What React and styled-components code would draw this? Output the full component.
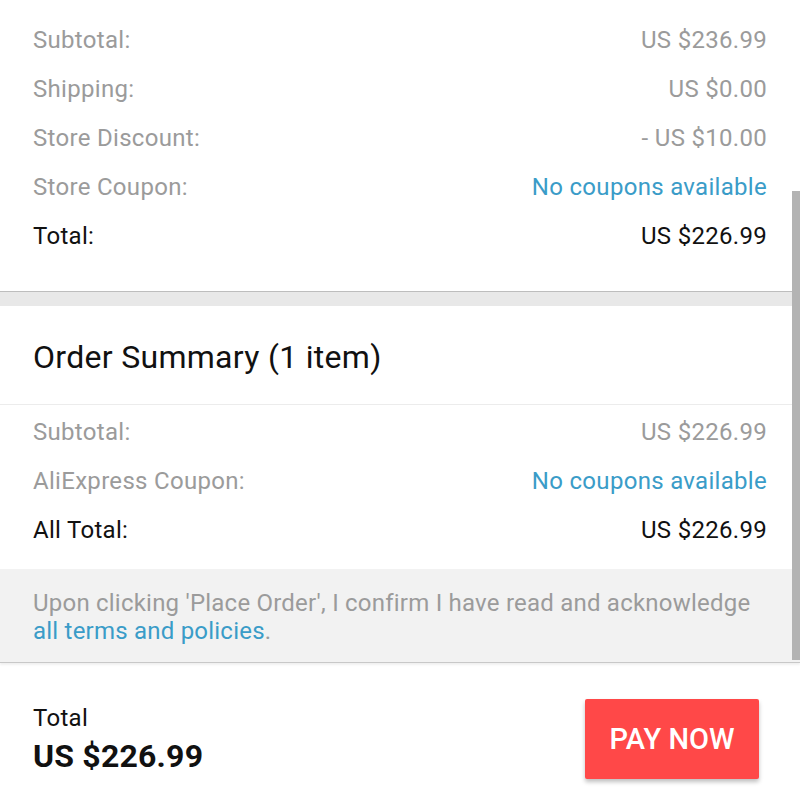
import React from 'react';
import styled, { createGlobalStyle } from 'styled-components';

const GlobalStyle = createGlobalStyle`
  html, body {
    margin: 0;
    padding: 0;
    background: #ffffff;
  }
  body {
    font-family: Roboto, 'Liberation Sans', sans-serif;
  }
`;

const storeRows = [
  { label: 'Subtotal:', value: 'US $236.99' },
  { label: 'Shipping:', value: 'US $0.00' },
  { label: 'Store Discount:', value: '- US $10.00' },
  { label: 'Store Coupon:', value: 'No coupons available', link: true },
  { label: 'Total:', value: 'US $226.99', strong: true },
];

const summaryRows = [
  { label: 'Subtotal:', value: 'US $226.99' },
  { label: 'AliExpress Coupon:', value: 'No coupons available', link: true },
  { label: 'All Total:', value: 'US $226.99', strong: true },
];

const App = () => {
  return (
    <>
      <GlobalStyle />
      <Screen>
        <Section $pad="15px 33px 31px">
          {storeRows.map((r) => (
            <Row key={r.label}>
              <Label $strong={r.strong}>{r.label}</Label>
              <Value $strong={r.strong} $link={r.link}>{r.value}</Value>
            </Row>
          ))}
        </Section>
        <Gap />
        <Section $pad="0">
          <SummaryHead>Order Summary (1 item)</SummaryHead>
          <SummaryRows>
            {summaryRows.map((r) => (
              <Row key={r.label}>
                <Label $strong={r.strong}>{r.label}</Label>
                <Value $strong={r.strong} $link={r.link}>{r.value}</Value>
              </Row>
            ))}
          </SummaryRows>
          <Notice>
            Upon clicking 'Place Order', I confirm I have read and acknowledge{' '}
            <NoticeLink>all terms and policies</NoticeLink>.
          </Notice>
        </Section>
        <Footer>
          <TotalBlock>
            <TotalLabel>Total</TotalLabel>
            <TotalAmount>US $226.99</TotalAmount>
          </TotalBlock>
          <PayButton>PAY NOW</PayButton>
        </Footer>
        <ScrollThumb />
      </Screen>
    </>
  );
};

const Screen = styled.div`
  position: relative;
  width: 800px;
  height: 807px;
  overflow: hidden;
  background: #ffffff;
  display: flex;
  flex-direction: column;
`;

const Section = styled.div`
  background: #ffffff;
  padding: ${(p) => p.$pad};
  display: flex;
  flex-direction: column;
`;

const Row = styled.div`
  height: 49px;
  display: flex;
  align-items: center;
  justify-content: space-between;
  font-size: 24px;
  letter-spacing: 0.3px;
`;

const Label = styled.span`
  color: ${(p) => (p.$strong ? '#111111' : '#9b9b9b')};
`;

const Value = styled.span`
  color: ${(p) => (p.$link ? '#3a9cc8' : p.$strong ? '#111111' : '#9b9b9b')};
`;

const Gap = styled.div`
  height: 14px;
  background: #e8e8e8;
  border-top: 1px solid #bdbdbd;
`;

const SummaryHead = styled.div`
  height: 99px;
  padding: 3px 33px 0;
  display: flex;
  align-items: center;
  box-sizing: border-box;
  font-size: 32px;
  letter-spacing: 0.3px;
  color: #111111;
  border-bottom: 1px solid #ececec;
`;

const SummaryRows = styled.div`
  padding: 2px 33px 15px;
  display: flex;
  flex-direction: column;
`;

const Notice = styled.div`
  background: #f2f2f2;
  padding: 20px 33px 17px;
  font-size: 24px;
  letter-spacing: 0.22px;
  line-height: 28px;
  color: #9b9b9b;
  border-bottom: 1px solid #c8c8c8;
  box-shadow: 0 2px 2px rgba(0, 0, 0, 0.06);
`;

const NoticeLink = styled.span`
  color: #3a9cc8;
`;

const Footer = styled.div`
  flex: 1;
  display: flex;
  align-items: flex-start;
  justify-content: space-between;
  padding: 36px 41px 0 33px;
`;

const TotalBlock = styled.div`
  display: flex;
  flex-direction: column;
  padding-top: 5px;
`;

const TotalLabel = styled.div`
  font-size: 24px;
  letter-spacing: 0.3px;
  line-height: 28px;
  color: #111111;
`;

const TotalAmount = styled.div`
  margin-top: 6px;
  font-size: 32px;
  line-height: 36px;
  font-weight: 700;
  letter-spacing: 0.2px;
  color: #111111;
`;

const PayButton = styled.button`
  width: 174px;
  height: 80px;
  border: none;
  border-radius: 2px;
  background: #ff4848;
  color: #ffffff;
  font-family: Roboto, 'Liberation Sans', sans-serif;
  font-size: 29px;
  font-weight: 500;
  box-shadow: 0 3px 4px rgba(0, 0, 0, 0.25);
  cursor: pointer;
`;

const ScrollThumb = styled.div`
  position: absolute;
  right: 0;
  top: 191px;
  width: 8px;
  height: 469px;
  background: #b3b3b3;
`;

export default App;
